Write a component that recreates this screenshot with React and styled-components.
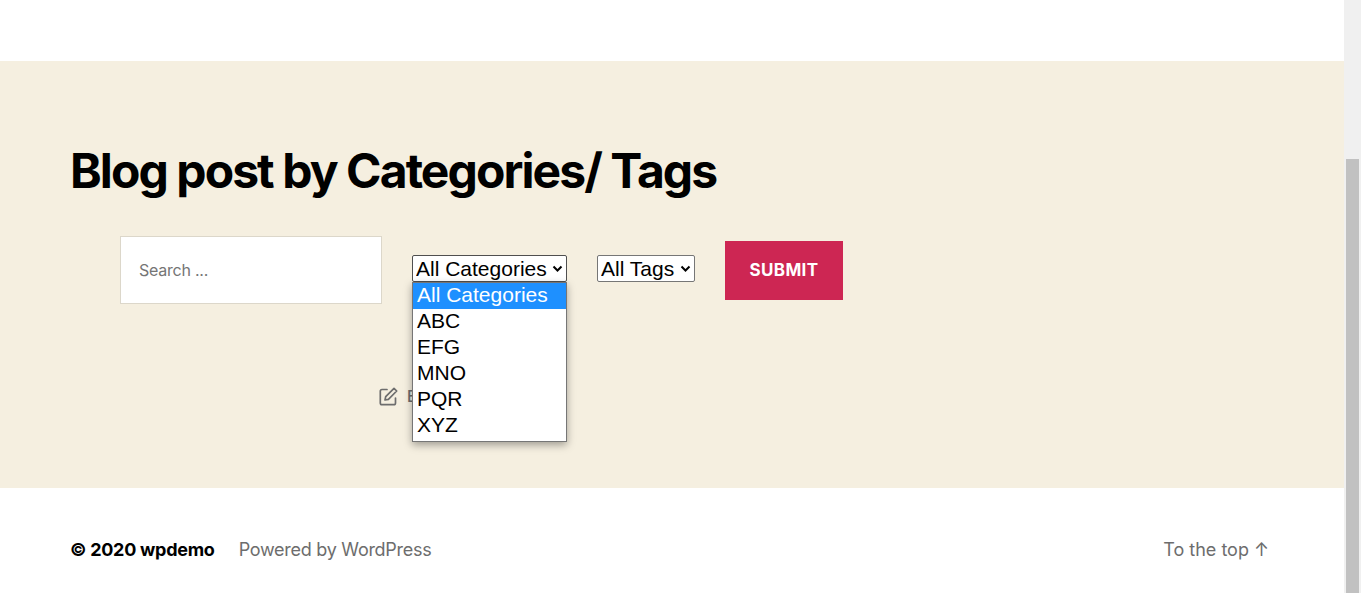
import React from "react";
import styled, { createGlobalStyle } from "styled-components";

const GlobalStyle = createGlobalStyle`
  *, *::before, *::after { box-sizing: border-box; }
  body {
    margin: 0;
    background: #fff;
    color: #000;
    font-family: Inter, "Liberation Sans", sans-serif;
    font-size: 18px;
  }
`;

const Window = styled.div`
  display: flex;
  min-height: 100vh;
  padding-right: 5px;
`;

const Page = styled.div`
  flex: 1;
  min-width: 0;
  display: flex;
  flex-direction: column;
  padding-top: 61px;
`;

const ScrollTrack = styled.div`
  flex: none;
  display: flex;
  width: 17px;
  padding: 159px 2px 0;
  background: #f0f0f0;
`;

const ScrollThumb = styled.div`
  flex: 1;
  background: #c1c1c1;
`;

const Main = styled.main`
  flex: 1;
  padding: 80px 40px 76px;
  background: #f5efe0;
`;

const Container = styled.div`
  width: 100%;
  max-width: 1204px;
  margin: 0 auto;
`;

const Title = styled.h2`
  margin: 0 0 35px;
  font-size: 48px;
  font-weight: 700;
  line-height: 60px;
  letter-spacing: -0.04em;
`;

const SearchForm = styled.form`
  display: flex;
  flex-wrap: wrap;
  align-items: baseline;
  gap: 30px;
  padding-left: 50px;
`;

const SearchInput = styled.input`
  width: 262px;
  height: 68px;
  padding: 0 18px;
  border: 1px solid #dcd7ca;
  border-radius: 0;
  background: #fff;
  color: #000;
  font: 400 16px Inter, sans-serif;
  letter-spacing: -0.015em;
  &::placeholder { color: #757575; opacity: 1; }
`;

const SelectField = styled.div`
  position: relative;
  display: flex;
  align-items: center;
  width: ${(p) => p.$width};
`;

const Select = styled.select`
  appearance: none;
  width: 100%;
  height: 27px;
  padding: 0 0 0 3px;
  border: 1px solid ${(p) => (p.$open ? "#4f4f4f" : "#767676")};
  border-radius: 2px;
  background: #fff;
  color: #000;
  font: 400 21px "Liberation Sans", Arial, sans-serif;
`;

const Chevron = styled.svg`
  position: absolute;
  right: 4px;
  width: 11px;
  height: 8px;
  pointer-events: none;
`;

const Options = styled.ul`
  position: absolute;
  top: 100%;
  left: 0;
  z-index: 1;
  width: 100%;
  margin: 0;
  padding: 0 0 2px;
  border: 1px solid #767676;
  background: #fff;
  box-shadow: 0 3px 8px rgba(0, 0, 0, 0.35);
  list-style: none;
  font: 400 21px/24px "Liberation Sans", Arial, sans-serif;
`;

const Option = styled.li`
  padding: 0 0 2px 4px;
  background: ${(p) => (p.$active ? "#1e90ff" : "transparent")};
  color: ${(p) => (p.$active ? "#fff" : "#000")};
  white-space: nowrap;
`;

const SubmitButton = styled.button`
  width: 118px;
  height: 59px;
  padding: 0;
  border: 0;
  background: #cd2653;
  color: #fff;
  font: 700 17px Inter, sans-serif;
  letter-spacing: 0.02em;
  text-transform: uppercase;
`;

const EditRow = styled.div`
  width: 100%;
  max-width: 586px;
  margin: 80px auto 0;
`;

const EditLink = styled.a`
  display: flex;
  align-items: center;
  gap: 9px;
  color: #6d6d6d;
  font-size: 16px;
  font-weight: 500;
  line-height: 24px;
  text-decoration: none;
`;

const Footer = styled.footer`
  padding: 48px 40px 29px;
  line-height: 28px;
`;

const FooterInner = styled(Container)`
  display: flex;
  justify-content: space-between;
`;

const Credits = styled.div`
  display: flex;
  gap: 24px;
  letter-spacing: -0.015em;
`;

const FooterLink = styled.a`
  color: ${(p) => (p.$strong ? "#000" : "#6d6d6d")};
  font-weight: ${(p) => (p.$strong ? 700 : 400)};
  text-decoration: none;
`;

const Copyright = styled.p`
  margin: 0;
  font-weight: 700;
`;

const ToTop = styled(FooterLink)`
  padding-right: 5px;
`;

const categories = ["All Categories", "ABC", "EFG", "MNO", "PQR", "XYZ"];

function Dropdown({ label, options, width, open }) {
  return (
    <SelectField $width={width}>
      <Select aria-label={label} $open={open}>
        {options.map((o) => (
          <option key={o}>{o}</option>
        ))}
      </Select>
      <Chevron viewBox="0 0 11 8" aria-hidden="true">
        <path d="M1.5 1.5 5.5 5.5 9.5 1.5" fill="none" stroke="#000" strokeWidth="2" />
      </Chevron>
      {open && (
        <Options role="listbox" aria-label={label}>
          {options.map((o, i) => (
            <Option key={o} role="option" aria-selected={i === 0} $active={i === 0}>
              {o}
            </Option>
          ))}
        </Options>
      )}
    </SelectField>
  );
}

function EditIcon() {
  return (
    <svg width="19" height="19" viewBox="0 0 19 19" aria-hidden="true">
      <g fill="none" stroke="#6d6d6d" strokeWidth="1.7" strokeLinecap="round" strokeLinejoin="round">
        <path d="M8 2.5H3A1.7 1.7 0 0 0 1.3 4.2V16A1.7 1.7 0 0 0 3 17.7H14.8A1.7 1.7 0 0 0 16.5 16V11" />
        <path d="M15 1.3 17.7 4 9.4 12.3 6 13 6.7 9.6Z" />
      </g>
    </svg>
  );
}

export default function App() {
  return (
    <>
      <GlobalStyle />
      <Window>
        <Page>
          <Main>
            <Container>
              <Title>Blog post by Categories/ Tags</Title>
              <SearchForm onSubmit={(e) => e.preventDefault()}>
                <SearchInput type="search" aria-label="Search" placeholder="Search ..." />
                <Dropdown label="Categories" options={categories} width="155px" open />
                <Dropdown label="Tags" options={["All Tags"]} width="98px" />
                <SubmitButton type="submit">Submit</SubmitButton>
              </SearchForm>
              <EditRow>
                <EditLink href="#edit">
                  <EditIcon />
                  Edit
                </EditLink>
              </EditRow>
            </Container>
          </Main>
          <Footer>
            <FooterInner>
              <Credits>
                <Copyright>
                  © 2020 <FooterLink $strong href="#home">wpdemo</FooterLink>
                </Copyright>
                <FooterLink href="#wordpress">Powered by WordPress</FooterLink>
              </Credits>
              <ToTop href="#top">To the top ↑</ToTop>
            </FooterInner>
          </Footer>
        </Page>
        <ScrollTrack>
          <ScrollThumb />
        </ScrollTrack>
      </Window>
    </>
  );
}
